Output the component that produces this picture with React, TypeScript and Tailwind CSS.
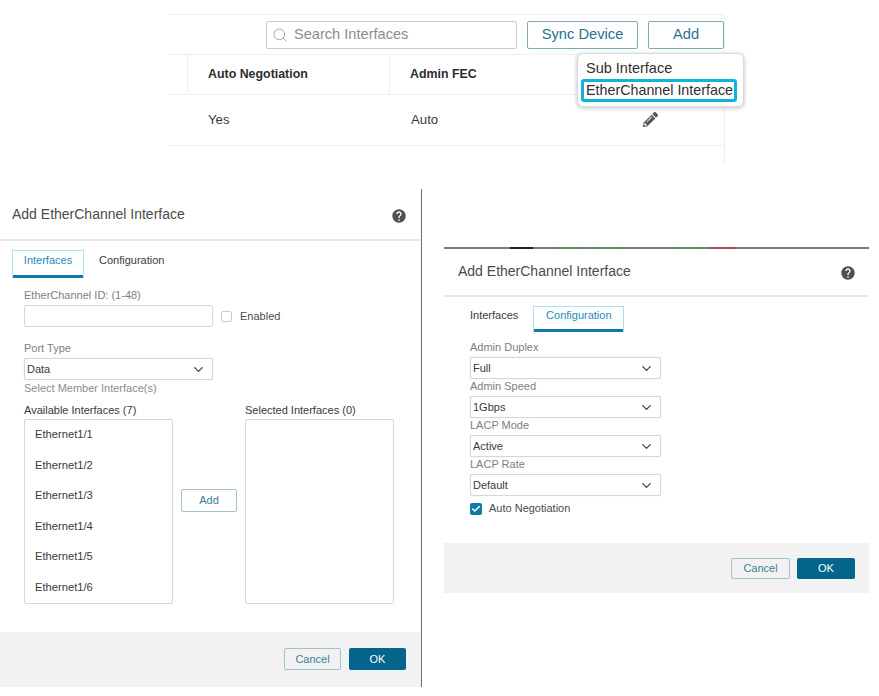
import { Search, ChevronDown, Check } from 'lucide-react'
import { MdHelp } from 'react-icons/md'
import { FaPencilAlt } from 'react-icons/fa'

function SelectBox({ value, className = 'w-[191px]' }: { value: string; className?: string }) {
  return (
    <div className={`flex h-[22px] items-center justify-between rounded-[2px] border border-[#d5d8da] bg-white pl-[2px] pr-[6px] text-[11px] text-[#39393b] shadow-[0_0_1px_#c4c7cc] ${className}`}>
      <span>{value}</span>
      <ChevronDown className="h-[15px] w-[15px] text-[#49494b]" strokeWidth={2.2} />
    </div>
  )
}

function TabLabel({ label, active, className = '' }: { label: string; active?: boolean; className?: string }) {
  if (active) {
    return (
      <div className={`flex flex-col items-center border border-b-0 border-[#a9e3f2] text-[11px] text-[#1e8bb5] ${className}`}>
        <span className="flex-1">{label}</span>
        <div className="h-[3px] w-full bg-[#0d7aa8]" />
      </div>
    )
  }
  return <div className={`text-[11px] font-medium text-[#39393b] ${className}`}>{label}</div>
}

function FooterButtons({ cancelWidth, okWidth, height, gap }: { cancelWidth: string; okWidth: string; height: string; gap: string }) {
  return (
    <div className={`flex ${gap}`}>
      <button className={`${cancelWidth} ${height} rounded-[2px] border border-[#9fc3cf] text-[11px] text-[#3a7f99]`}>Cancel</button>
      <button className={`${okWidth} ${height} rounded-[2px] bg-[#03658c] text-[11px] text-white`}>OK</button>
    </div>
  )
}

function ListColumn({ title, items }: { title: string; items: string[] }) {
  return (
    <div className="w-[149px]">
      <div className="mb-[1px] text-[11px] leading-[15px] text-[#39393b]">{title}</div>
      <div className="flex h-[185px] flex-col gap-[16.5px] rounded-[2px] border border-[#d5d8da] pl-[10px] pt-[7px] text-[11.2px] leading-[14px] text-[#39393b]">
        {items.map((item) => (
          <div key={item}>{item}</div>
        ))}
      </div>
    </div>
  )
}

function TopPanel() {
  return (
    <div className="relative ml-[168px] h-[149px] w-[557px] border-t border-r border-[#eeeeee]">
      <div className="flex h-[39px] items-start justify-end gap-[10px] pt-[6px]">
        <div className="flex h-[28px] w-[251px] items-center gap-[6px] rounded-[2px] border border-[#c9ccce] pl-[5px] text-[14.6px] text-[#8a8d90]">
          <Search className="h-[16px] w-[16px] text-[#a5a7a9]" strokeWidth={1.5} />
          <span>Search Interfaces</span>
        </div>
        <button className="h-[28px] w-[111px] rounded-[2px] border border-[#7fa9b9] pb-[1px] text-[14.7px] text-[#1f7391]">Sync Device</button>
        <button className="h-[28px] w-[76px] rounded-[2px] border border-[#7fa9b9] pb-[1px] text-[14.7px] text-[#1f7391]">Add</button>
      </div>
      <div className="flex h-[41px] items-stretch border-y border-[#eeeeee] pb-[1px] text-[12.4px] font-bold text-[#2c2c2e]">
        <div className="w-[20px] border-r border-[#eeeeee]" />
        <div className="flex w-[202px] items-center border-r border-[#eeeeee] pl-[20px]">Auto Negotiation</div>
        <div className="flex items-center pl-[20px]">Admin FEC</div>
      </div>
      <div className="flex h-[51px] items-center border-b border-[#eeeeee] text-[13.2px] text-[#39393b]">
        <div className="w-[222px] pl-[40px]">Yes</div>
        <div className="w-[253px] pl-[21px]">Auto</div>
        <FaPencilAlt className="mb-[1px] h-[15px] w-[15px] text-[#58585a]" />
      </div>
      <div className="absolute left-[409px] top-[38px] h-[54px] w-[167px] rounded-[6px] border border-[#d8dadb] bg-white pl-[3px] pt-[4px] text-[14.5px] text-[#2f2f31] shadow-[0_1px_4px_rgba(0,0,0,0.25)]">
        <div className="pl-[5px] leading-[20px]">Sub Interface</div>
        <div className="mt-[1px] h-[23px] w-[156px] overflow-hidden whitespace-nowrap rounded-[3px] border-[3px] border-[#0db4dd] pl-[2px] text-[14.3px] leading-[17px]">EtherChannel Interface</div>
      </div>
    </div>
  )
}

function InterfacesDialog() {
  const ports = ['Ethernet1/1', 'Ethernet1/2', 'Ethernet1/3', 'Ethernet1/4', 'Ethernet1/5', 'Ethernet1/6']
  return (
    <div className="flex h-[498px] w-[422px] shrink-0 flex-col border-r border-[#6d6f72] bg-white">
      <div className="flex h-[52px] items-center justify-between border-b-2 border-[#e8e8e8] pl-[12px] pr-[14px] pt-[1px] text-[14px] text-[#4a4a4c]">
        <span>Add EtherChannel Interface</span>
        <MdHelp className="mt-[3px] h-[16px] w-[16px] text-[#505052]" />
      </div>
      <div className="flex-1 pl-[24px]">
        <div className="-ml-[12px] mt-[9px] flex h-[28px] items-start gap-[15px]">
          <TabLabel label="Interfaces" active className="h-[28px] w-[72px] pt-[1px]" />
          <TabLabel label="Configuration" className="pt-[2px]" />
        </div>
        <div className="mt-[10px] text-[11px] leading-[15px] text-[#7c7e81]">EtherChannel ID: (1-48)</div>
        <div className="mt-[2px] flex items-center gap-[8px]">
          <div className="h-[22px] w-[189px] rounded-[2px] border border-[#d5d8da]" />
          <div className="h-[11px] w-[11px] rounded-[2px] border border-[#c9ccce]" />
          <span className="text-[11px] text-[#4a4a4c]">Enabled</span>
        </div>
        <div className="mt-[14px] text-[11px] leading-[15px] text-[#7c7e81]">Port Type</div>
        <SelectBox value="Data" className="mt-[2px] w-[189px]" />
        <div className="mt-[1px] text-[11px] leading-[15px] text-[#8a8c8f]">Select Member Interface(s)</div>
        <div className="mt-[7px] flex items-start">
          <ListColumn title="Available Interfaces (7)" items={ports} />
          <button className="mx-[8px] mt-[86px] h-[23px] w-[56px] rounded-[2px] border border-[#9fc3cf] text-[11px] text-[#3a7f99]">Add</button>
          <ListColumn title="Selected Interfaces (0)" items={[]} />
        </div>
      </div>
      <div className="flex h-[55px] items-start justify-end bg-[#f2f2f2] pr-[15px] pt-[16px]">
        <FooterButtons cancelWidth="w-[57px]" okWidth="w-[57px]" height="h-[22px]" gap="gap-[8px]" />
      </div>
    </div>
  )
}

function ConfigurationDialog() {
  const fields = [
    { label: 'Admin Duplex', value: 'Full' },
    { label: 'Admin Speed', value: '1Gbps' },
    { label: 'LACP Mode', value: 'Active' },
    { label: 'LACP Rate', value: 'Default' },
  ]
  return (
    <div className="ml-[22px] mt-[58px] flex h-[346px] w-[425px] flex-col bg-white">
      <div className="flex h-[2px] bg-[#77797c]">
        <div className="ml-[66px] w-[23px] bg-[#222222]" />
        <div className="ml-[25px] w-[25px] bg-[#5f8f5f]" />
        <div className="ml-[15px] w-[25px] bg-[#5f8f5f]" />
        <div className="ml-[55px] w-[25px] bg-[#5f8f5f]" />
        <div className="ml-[7px] w-[25px] bg-[#a84d55]" />
      </div>
      <div className="flex h-[48px] items-center justify-between border-b-2 border-[#e8e8e8] pb-[2px] pl-[14px] pr-[13px] text-[14px] text-[#4a4a4c]">
        <span>Add EtherChannel Interface</span>
        <MdHelp className="mt-[3px] h-[16px] w-[16px] text-[#505052]" />
      </div>
      <div className="flex-1 pl-[26px]">
        <div className="mt-[9px] flex h-[27px] items-start gap-[15px]">
          <TabLabel label="Interfaces" className="pt-[1px]" />
          <TabLabel label="Configuration" active className="h-[26px] w-[91px]" />
        </div>
        <div className="mt-[7px]">
          {fields.map((field) => (
            <div key={field.label}>
              <div className="mb-[3px] text-[11px] leading-[14px] text-[#7c7e81]">{field.label}</div>
              <SelectBox value={field.value} />
            </div>
          ))}
        </div>
        <div className="mt-[4px] flex items-center gap-[7px]">
          <div className="flex h-[12px] w-[12px] items-center justify-center rounded-[2px] bg-[#0d7aa8]">
            <Check className="h-[10px] w-[10px] text-white" strokeWidth={3.5} />
          </div>
          <span className="mb-[2px] text-[11px] text-[#4a4a4c]">Auto Negotiation</span>
        </div>
      </div>
      <div className="flex h-[50px] items-start justify-end bg-[#f2f2f2] pr-[14px] pt-[15px]">
        <FooterButtons cancelWidth="w-[59px]" okWidth="w-[58px]" height="h-[21px]" gap="gap-[7px]" />
      </div>
    </div>
  )
}

export default function App() {
  return (
    <div className="h-[696px] w-[879px] overflow-hidden bg-white pt-[14px] font-['Liberation_Sans',Arial,sans-serif]">
      <TopPanel />
      <div className="mt-[26px] flex items-start">
        <InterfacesDialog />
        <ConfigurationDialog />
      </div>
    </div>
  )
}
